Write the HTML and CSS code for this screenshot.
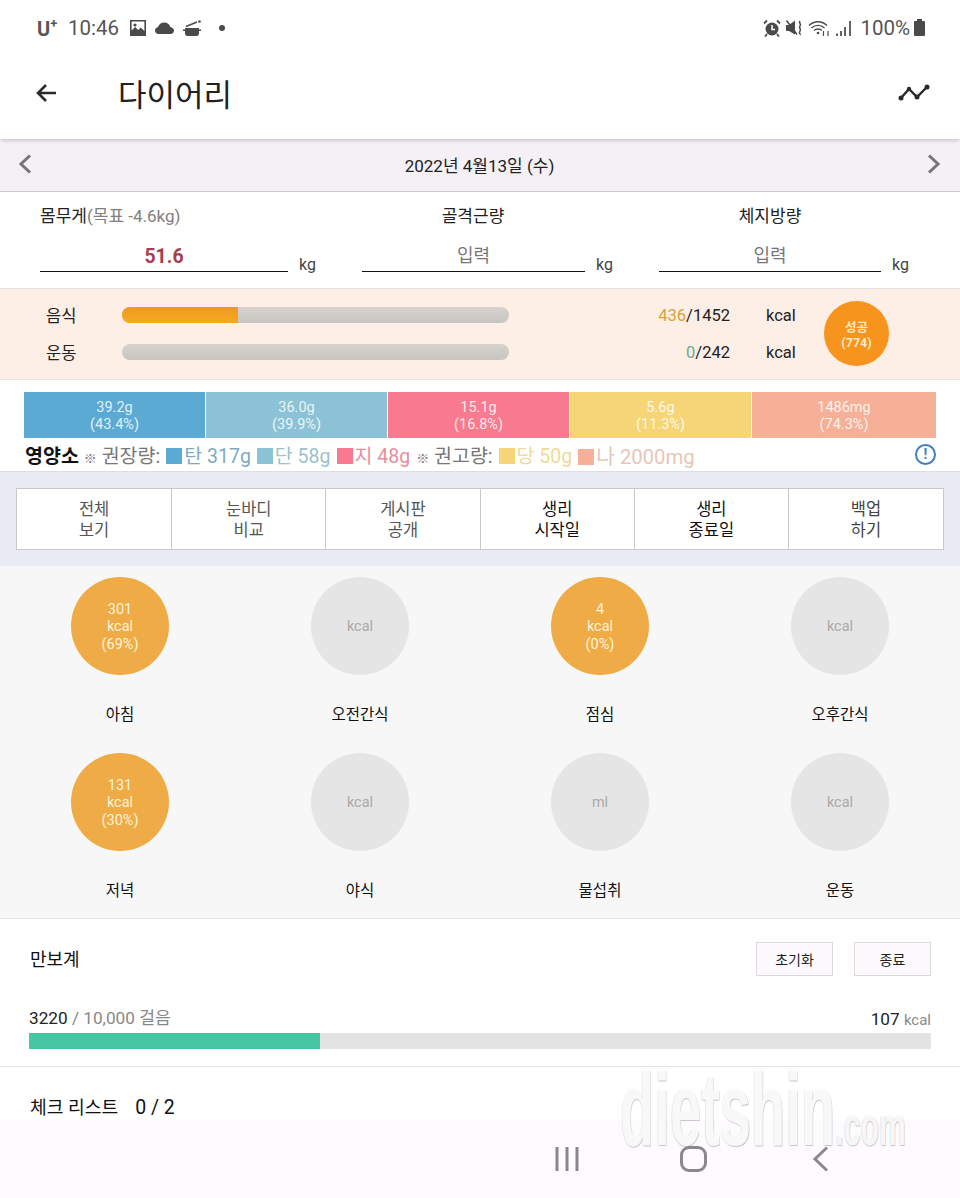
FILE: index.html
```html
<!DOCTYPE html>
<html lang="ko">
<head>
    <meta charset="UTF-8">
    <meta name="viewport" content="width=device-width, initial-scale=1.0">
    <title>다이어리</title>
    <link rel="stylesheet" href="styles.css">
</head>
<body>
    <div class="page">
        <div class="status-bar">
            <div class="status-left">
                <span class="carrier">U<sup>+</sup></span>
                <span class="clock">10:46</span>
                <svg class="st-icon" width="18" height="18" viewBox="0 0 18 18"><path fill="#4a4a4a" fill-rule="evenodd" d="M1 1h16v16H1zM2.600 2.600v9l3.600-3.600 3 3 2.600-2.400 3.600 3.400V2.600z"/><circle cx="6" cy="6" r="1.600" fill="#4a4a4a"/></svg>
                <svg class="st-icon" width="19" height="12" viewBox="0 0 19 12"><path fill="#4a4a4a" d="M3.500 12C1.500 12 0 10.500 0 8.600c0-1.800 1.300-3.200 3-3.500C3.800 2.400 6.200.5 9.300.5c2.900 0 5.200 1.800 6 4.400 2.100.2 3.700 1.700 3.700 3.700S17.400 12 15.500 12z"/></svg>
                <svg class="st-icon" width="20" height="18" viewBox="0 0 20 18"><path fill="#4a4a4a" d="M3 9h14v1.500h2V12h-2v2.500c0 1.400-1 2.500-2.500 2.500h-9C4 17 3 15.900 3 14.500V12H1v-1.500h2z"/><path stroke="#4a4a4a" stroke-width="1.600" fill="none" d="M4 7.500 15 3"/><circle cx="17.500" cy="2.500" r="1.300" fill="#4a4a4a"/></svg>
                <span class="st-dot"></span>
            </div>
            <div class="status-right">
                <svg width="18" height="18" viewBox="0 0 18 18"><circle cx="9" cy="10" r="6.500" fill="#4a4a4a"/><path fill="none" stroke="#fff" stroke-width="1.500" d="M9 6v4.500h3"/><path fill="none" stroke="#4a4a4a" stroke-width="1.800" d="M1 4.500 4 1.500M17 4.500l-3-3M4 15l-2 2.500M14 15l2 2.500"/></svg>
                <svg width="19" height="18" viewBox="0 0 19 18"><path fill="#4a4a4a" d="M1 6h3l6-4.500v14L4 12H1z"/><path stroke="#4a4a4a" stroke-width="1.600" d="M1.500 1.500 12 15.500"/><path fill="none" stroke="#4a4a4a" stroke-width="1.500" d="M15 2c-2 2 2 3 0 5s2 3 0 5 1 3 0 4"/></svg>
                <svg width="23" height="18" viewBox="0 0 23 18"><path fill="none" stroke="#4a4a4a" stroke-width="1.300" d="M1 6.500c5-5 13-5 18 0M3.500 9c3.500-3.500 9.500-3.500 13 0M6 11.500c2-2 6-2 8 0"/><circle cx="10" cy="14" r="1.300" fill="#4a4a4a"/><path fill="none" stroke="#4a4a4a" stroke-width="1.200" d="M15.500 12v5M20 17v-5"/></svg>
                <svg width="18" height="18" viewBox="0 0 18 18"><path stroke="#4a4a4a" stroke-width="1.700" d="M2 14.500V17M6 12v5M10 8v9M15 2v15"/></svg>
                <span class="battery-text">100%</span>
                <span class="battery"></span>
            </div>
        </div>

        <header class="app-header">
            <svg class="back" width="22" height="20" viewBox="0 0 22 20"><path fill="none" stroke="#2b2b2b" stroke-width="2.600" d="M21 10H3M11 2l-8 8 8 8"/></svg>
            <h1>다이어리</h1>
            <svg class="trend" width="32" height="18" viewBox="0 0 32 18"><path fill="none" stroke="#2b2b2b" stroke-width="2.400" d="M3 14 11 5l8 8 10-10"/><circle cx="3" cy="14" r="2.500" fill="#2b2b2b"/><circle cx="11" cy="5" r="2.200" fill="#2b2b2b"/><circle cx="19" cy="13" r="2.500" fill="#2b2b2b"/><circle cx="29" cy="3" r="2.500" fill="#2b2b2b"/></svg>
        </header>

        <div class="date-bar">
            <svg width="14" height="20" viewBox="0 0 14 20"><path fill="none" stroke="#77737a" stroke-width="3" d="M12 1.500 3 10l9 8.500"/></svg>
            <span>2022년 4월13일 (수)</span>
            <svg width="14" height="20" viewBox="0 0 14 20"><path fill="none" stroke="#77737a" stroke-width="3" d="M2 1.500 11 10l-9 8.500"/></svg>
        </div>

        <section class="body-stats">
            <div class="stat">
                <div class="stat-label">몸무게<span class="goal">(목표 -4.6kg)</span></div>
                <div class="stat-input"><span class="field weight">51.6</span><span class="unit">kg</span></div>
            </div>
            <div class="stat">
                <div class="stat-label center">골격근량</div>
                <div class="stat-input"><span class="field">입력</span><span class="unit">kg</span></div>
            </div>
            <div class="stat">
                <div class="stat-label center">체지방량</div>
                <div class="stat-input"><span class="field">입력</span><span class="unit">kg</span></div>
            </div>
        </section>

        <section class="calories">
            <div class="cal-rows">
                <div class="cal-row">
                    <span class="cal-name">음식</span>
                    <div class="track"><div class="track-fill" style="width: 30%"></div></div>
                    <span class="cal-num"><em class="eaten">436</em>/1452</span>
                    <span class="cal-unit">kcal</span>
                </div>
                <div class="cal-row">
                    <span class="cal-name">운동</span>
                    <div class="track"></div>
                    <span class="cal-num"><em class="burned">0</em>/242</span>
                    <span class="cal-unit">kcal</span>
                </div>
            </div>
            <div class="result">성공<br>(774)</div>
        </section>

        <section class="nutrients">
            <div class="nutri-bars">
                <div class="nutri carb">39.2g<br>(43.4%)</div>
                <div class="nutri protein">36.0g<br>(39.9%)</div>
                <div class="nutri fat">15.1g<br>(16.8%)</div>
                <div class="nutri sugar">5.6g<br>(11.3%)</div>
                <div class="nutri sodium">1486mg<br>(74.3%)</div>
            </div>
            <div class="legend">
                <strong>영양소</strong>
                <span class="note"><small>※</small> 권장량:</span>
                <span class="lg lg-carb"><i></i>탄 317g</span>
                <span class="lg lg-protein"><i></i>단 58g</span>
                <span class="lg lg-fat"><i></i>지 48g</span>
                <span class="note"><small>※</small> 권고량:</span>
                <span class="lg lg-sugar"><i></i>당 50g</span>
                <span class="lg lg-sodium"><i></i>나 2000mg</span>
                <span class="info">!</span>
            </div>
        </section>

        <section class="actions">
            <div class="action-grid">
                <a class="muted">전체<br>보기</a>
                <a class="muted">눈바디<br>비교</a>
                <a class="muted">게시판<br>공개</a>
                <a>생리<br>시작일</a>
                <a>생리<br>종료일</a>
                <a class="soft">백업<br>하기</a>
            </div>
        </section>

        <section class="meals">
            <div class="meal"><div class="dot on">301<br>kcal<br>(69%)</div><p>아침</p></div>
            <div class="meal"><div class="dot">kcal</div><p>오전간식</p></div>
            <div class="meal"><div class="dot on">4<br>kcal<br>(0%)</div><p>점심</p></div>
            <div class="meal"><div class="dot">kcal</div><p>오후간식</p></div>
            <div class="meal"><div class="dot on">131<br>kcal<br>(30%)</div><p>저녁</p></div>
            <div class="meal"><div class="dot">kcal</div><p>야식</p></div>
            <div class="meal"><div class="dot">ml</div><p>물섭취</p></div>
            <div class="meal"><div class="dot">kcal</div><p>운동</p></div>
        </section>

        <section class="pedometer">
            <div class="ped-head">
                <span class="ped-title">만보계</span>
                <div class="ped-btns">
                    <button>초기화</button>
                    <button>종료</button>
                </div>
            </div>
            <div class="ped-info">
                <span>3220 <small>/ 10,000 걸음</small></span>
                <span>107 <small class="ped-kcal">kcal</small></span>
            </div>
            <div class="ped-track"><div class="ped-fill" style="width: 32.3%"></div></div>
        </section>

        <section class="checklist">
            <span>체크 리스트</span>
            <span class="check-count">0 / 2</span>
        </section>

        <nav class="nav-bar">
            <svg width="26" height="26" viewBox="0 0 26 26"><path stroke="#8b878c" stroke-width="3" d="M3 1v24M13 1v24M23 1v24"/></svg>
            <span class="nav-home"></span>
            <svg width="18" height="26" viewBox="0 0 18 26"><path fill="none" stroke="#8b878c" stroke-width="3" d="M15 1.500 3 13l12 11.500"/></svg>
        </nav>

        <div class="watermark">dietshin<span>.com</span></div>
    </div>
</body>
</html>
```
FILE: styles.css
```css
* {
    box-sizing: border-box;
}
html, body {
    margin: 0;
    padding: 0;
}
body {
    font-family: Roboto, 'Noto Sans CJK KR', sans-serif;
    background-color: #fff;
    color: #222;
}
.page {
    position: relative;
    width: 960px;
    height: 1198px;
    overflow: hidden;
}

/* status bar */
.status-bar {
    height: 56px;
    display: flex;
    justify-content: space-between;
    align-items: center;
    padding: 0 35px 0 37px;
    color: #555;
}
.status-left, .status-right {
    display: flex;
    align-items: center;
}
.carrier {
    font-size: 20px;
    font-weight: 700;
    width: 31px;
    margin-top: 2px;
}
.carrier sup {
    font-size: 13px;
    line-height: 0;
}
.clock {
    font-size: 20.500px;
    width: 61px;
}
.st-icon {
    margin-right: 8px;
}
.st-dot {
    width: 6px;
    height: 6px;
    border-radius: 50%;
    background-color: #4a4a4a;
    margin-left: 9px;
}
.status-right {
    gap: 4px;
}
.battery-text {
    font-size: 20.500px;
    margin-left: 3px;
}
.battery {
    position: relative;
    width: 11px;
    height: 15px;
    background-color: #4a4a4a;
    border-radius: 1px;
}
.battery::before {
    content: "";
    position: absolute;
    top: -2px;
    left: 3px;
    width: 5px;
    height: 2px;
    background-color: #4a4a4a;
}

/* header */
.app-header {
    position: relative;
    height: 83px;
    display: flex;
    align-items: center;
    padding: 0 30px 10px 35px;
    background-color: #fff;
    box-shadow: 0 3px 3px -1px rgba(0, 0, 0, 0.16);
}
.app-header h1 {
    flex: 1;
    margin: 0 0 0 61px;
    font-size: 31px;
    font-weight: 400;
    color: #222;
}

.date-bar {
    height: 53px;
    display: flex;
    justify-content: space-between;
    align-items: center;
    padding: 0 19px 2px 18px;
    background-color: #f4f0f5;
    border-bottom: 1px solid #ccc8cc;
    font-size: 17px;
    color: #222;
}

/* body measurements */
.body-stats {
    height: 97px;
    display: grid;
    grid-template-columns: 276px 251px 250px;
    column-gap: 46px;
    padding: 14px 0 0 40px;
    border-bottom: 1px solid #e2dedd;
}
.stat-label {
    width: 222px;
    height: 21px;
    font-size: 17px;
    line-height: 21px;
    white-space: nowrap;
    color: #222;
}
.stat-label.center {
    text-align: center;
}
.goal {
    color: #808080;
}
.stat-input {
    display: flex;
    margin-top: 14px;
}
.field {
    flex: 1;
    height: 31px;
    border-bottom: 1.500px solid #111;
    text-align: center;
    font-size: 18px;
    line-height: 30px;
    color: #777;
}
.field.weight {
    font-size: 19.500px;
    font-weight: 700;
    line-height: 32px;
    color: #a5404f;
}
.unit {
    width: 28px;
    margin-top: 12px;
    text-align: right;
    font-size: 16px;
    line-height: 24px;
    color: #444;
}

/* calories */
.calories {
    height: 91px;
    display: flex;
    background-color: #fdeee6;
    border-bottom: 1px solid #e9e5e2;
    padding: 0 0 0 46px;
}
.cal-rows {
    padding-top: 8px;
}
.cal-row {
    height: 36.500px;
    display: flex;
    align-items: center;
    font-size: 16.500px;
}
.cal-name {
    width: 76px;
    color: #222;
}
.track {
    width: 387px;
    height: 16px;
    border-radius: 8px;
    background: linear-gradient(#d6d2cd, #c8c4c1);
    overflow: hidden;
}
.track-fill {
    height: 100%;
    background: linear-gradient(#ec9a1d, #f8a825);
}
.cal-num {
    width: 221px;
    margin-top: 1px;
    text-align: right;
    color: #222;
}
.cal-num em {
    font-style: normal;
}
.eaten {
    color: #d5a437;
}
.burned {
    color: #6fa88a;
}
.cal-unit {
    margin: 1px 0 0 36px;
    width: 29px;
}
.result {
    width: 65px;
    height: 65px;
    margin: 12px 0 0 29px;
    padding-top: 2px;
    border-radius: 50%;
    background-color: #f7941e;
    color: #fbe8c8;
    display: flex;
    align-items: center;
    justify-content: center;
    text-align: center;
    font-size: 12.500px;
    font-weight: 700;
    line-height: 15px;
}

/* nutrients */
.nutrients {
    height: 92px;
    padding: 12px 24px 0;
    border-bottom: 1px solid #dddde2;
}
.nutri-bars {
    display: grid;
    grid-template-columns: 181px 181px 181px 181px 184px;
    column-gap: 1px;
}
.nutri {
    height: 46px;
    padding-top: 7px;
    text-align: center;
    font-size: 14.500px;
    line-height: 17px;
    color: rgba(255, 255, 255, 0.85);
}
.carb { background-color: #5baad3; }
.protein { background-color: #8bc2d5; }
.fat { background-color: #f87a8e; }
.sugar { background-color: #f6d577; }
.sodium { background-color: #f6b097; }
.legend {
    display: flex;
    align-items: center;
    height: 33px;
    gap: 6px;
    padding-left: 1px;
    font-size: 19.500px;
    white-space: nowrap;
}
.legend strong {
    font-weight: 700;
    color: #111;
    margin-right: -1px;
}
.note {
    color: #777;
}
.note small {
    font-size: 13px;
    font-weight: 700;
}
.lg i {
    display: inline-block;
    width: 16px;
    height: 16px;
    margin-right: 2px;
    vertical-align: -1px;
}
.lg-carb { color: #7fa9c2; }
.lg-carb i { background-color: #5baad3; }
.lg-protein { color: #9dc1cd; }
.lg-protein i { background-color: #8bc2d5; }
.lg-fat { color: #e88e9e; }
.lg-fat i { background-color: #f87a8e; }
.lg-sugar { color: #eeda9c; }
.lg-sugar i { background-color: #f6d577; }
.lg-sodium { color: #e8c6b6; font-size: 20.300px; }
.lg-sodium i { background-color: #f6b097; }
.info {
    margin-left: auto;
    width: 21px;
    height: 21px;
    border: 2px solid #3f7fc0;
    border-radius: 50%;
    color: #3f7fc0;
    font-size: 14px;
    font-weight: 700;
    line-height: 17px;
    text-align: center;
}

/* action buttons */
.actions {
    height: 94px;
    padding: 16px;
    background-color: #e9ebf4;
}
.action-grid {
    height: 62px;
    display: grid;
    grid-template-columns: repeat(5, 154.2px) 1fr;
    background-color: #fff;
    border: 1px solid #c8c8cc;
}
.action-grid a {
    display: flex;
    align-items: center;
    justify-content: center;
    padding-top: 2px;
    text-align: center;
    font-size: 16.500px;
    line-height: 21px;
    color: #111;
    border-left: 1px solid #c8c8cc;
}
.action-grid a:first-child {
    border-left: none;
}
.action-grid a.muted {
    color: #555;
}
.action-grid a.soft {
    color: #444;
}

/* meals */
.meals {
    height: 353px;
    display: grid;
    grid-template-columns: repeat(4, 1fr);
    grid-auto-rows: 176px;
    padding-top: 11px;
    background-color: #f7f7f7;
    border-bottom: 1px solid #e5e5e5;
}
.meal {
    display: flex;
    flex-direction: column;
    align-items: center;
}
.meal p {
    margin: 28px 0 0;
    font-size: 15.500px;
    line-height: 24px;
    color: #111;
}
.dot {
    width: 98px;
    height: 98px;
    padding-top: 2px;
    border-radius: 50%;
    background-color: #e5e5e5;
    color: #aaa;
    display: flex;
    align-items: center;
    justify-content: center;
    text-align: center;
    font-size: 14.500px;
    line-height: 17.500px;
}
.dot.on {
    background-color: #efac46;
    color: #fdf3dc;
}

/* pedometer */
.pedometer {
    height: 148px;
    padding: 23px 29px 0;
    border-bottom: 1px solid #e5e5e5;
}
.ped-head {
    display: flex;
    justify-content: space-between;
    height: 34px;
}
.ped-title {
    font-size: 18px;
    line-height: 36px;
    color: #111;
    margin-left: 1px;
}
.ped-btns {
    display: flex;
    gap: 21px;
}
.ped-btns button {
    width: 77px;
    height: 34px;
    padding: 0;
    border: 1px solid #dcd8dc;
    background-color: #fdfafd;
    font-family: inherit;
    font-size: 14px;
    color: #222;
}
.ped-info {
    display: flex;
    justify-content: space-between;
    align-items: flex-end;
    margin-top: 28px;
    height: 29px;
    padding-bottom: 4px;
    font-size: 17.200px;
    color: #222;
}
.ped-info small {
    font-size: 17.200px;
    color: #888;
}
.ped-info small.ped-kcal {
    font-size: 15px;
}
.ped-track {
    height: 16px;
    background-color: #e3e3e3;
}
.ped-fill {
    height: 100%;
    background-color: #45c7a5;
}

/* checklist + bottom */
.checklist {
    height: 53px;
    padding: 28px 0 0 30px;
    display: flex;
    gap: 17px;
    font-size: 18.200px;
    line-height: 26px;
    color: #111;
}
.check-count {
    font-size: 19.500px;
}
.nav-bar {
    height: 78px;
    display: flex;
    align-items: flex-start;
    padding: 26px 0 0 554px;
    background-color: #fdfbfd;
}
.nav-home {
    width: 27px;
    height: 26px;
    margin: 0 105px 0 100px;
    border: 3px solid #8b878c;
    border-radius: 9px;
}

/* site watermark over the screenshot */
.watermark {
    position: absolute;
    left: 620px;
    top: 1054px;
    font-family: 'Liberation Sans', sans-serif;
    font-size: 104px;
    font-weight: 700;
    line-height: 110px;
    color: rgba(255, 255, 255, 0.9);
    text-shadow: 1px 1px 1px rgba(120, 120, 120, 0.4), -1px 0 1px rgba(150, 150, 150, 0.25);
    transform: scaleX(0.54);
    transform-origin: left top;
    white-space: nowrap;
}
.watermark span {
    font-size: 56px;
}
```
